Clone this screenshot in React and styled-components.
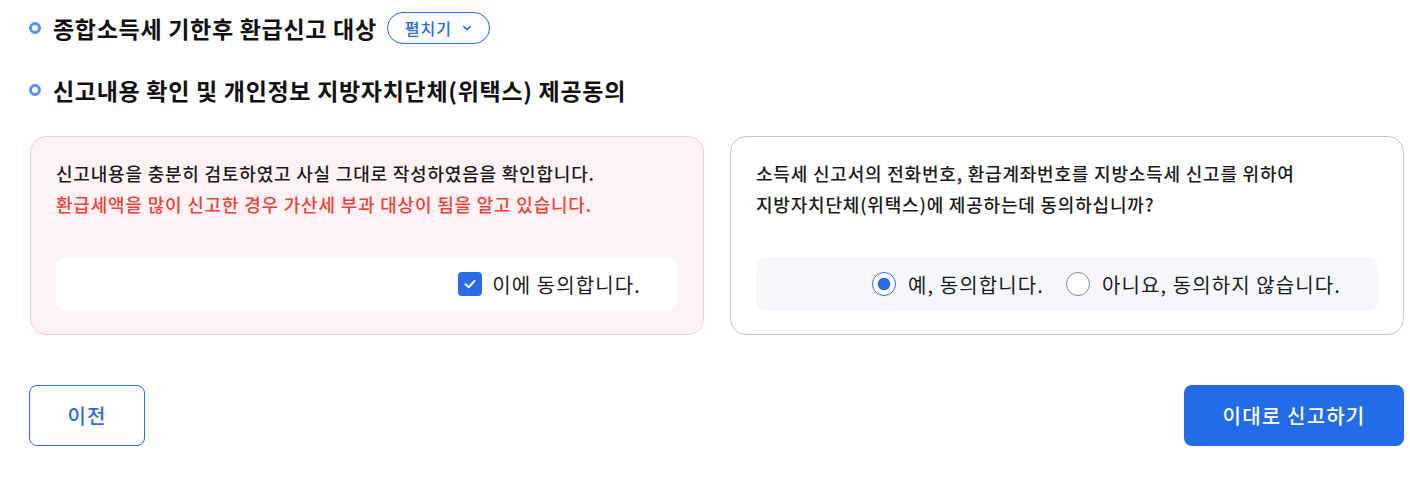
import React, { useState } from 'react';
import styled, { createGlobalStyle } from 'styled-components';

const GlobalStyle = createGlobalStyle`
	* {
		box-sizing: border-box;
	}
	body {
		margin: 0;
		background: #ffffff;
		font-family: 'Noto Sans CJK KR', 'Noto Sans', sans-serif;
		color: #111111;
	}
`;

function Chevron() {
	return (
		<svg width='10' height='10' viewBox='0 0 10 10' fill='none'>
			<path
				d='M1.8 3.6L5 6.6L8.2 3.6'
				stroke='#2a6be6'
				strokeWidth='1.7'
				strokeLinecap='round'
				strokeLinejoin='round'
			/>
		</svg>
	);
}

function Check() {
	return (
		<svg width='16' height='16' viewBox='0 0 16 16' fill='none'>
			<path
				d='M3.5 8.3L6.6 11.2L12.5 5'
				stroke='#ffffff'
				strokeWidth='2'
				strokeLinecap='round'
				strokeLinejoin='round'
			/>
		</svg>
	);
}

export default function App() {
	const [agree, setAgree] = useState(true);
	const [wetax, setWetax] = useState('yes');

	return (
		<>
			<GlobalStyle />
			<Page>
				<SectionTitle>
					<Bullet />
					<span>종합소득세 기한후 환급신고 대상</span>
					<ToggleButton type='button'>
						펼치기 <Chevron />
					</ToggleButton>
				</SectionTitle>
				<SectionTitle>
					<Bullet />
					<span>신고내용 확인 및 개인정보 지방자치단체(위택스) 제공동의</span>
				</SectionTitle>

				<Cards>
					<Card $tone='warn'>
						<Text>
							신고내용을 충분히 검토하였고 사실 그대로 작성하였음을 확인합니다.
							<br />
							<Warn>환급세액을 많이 신고한 경우 가산세 부과 대상이 됨을 알고 있습니다.</Warn>
						</Text>
						<ChoiceBox $tone='warn'>
							<Choice $gap={10} onClick={() => setAgree(!agree)}>
								<CheckBox $on={agree}>{agree && <Check />}</CheckBox>
								이에 동의합니다.
							</Choice>
						</ChoiceBox>
					</Card>

					<Card>
						<Text>
							소득세 신고서의 전화번호, 환급계좌번호를 지방소득세 신고를 위하여
							<br />
							지방자치단체(위택스)에 제공하는데 동의하십니까?
						</Text>
						<ChoiceBox>
							<Choice $gap={12} onClick={() => setWetax('yes')}>
								<Radio $on={wetax === 'yes'} />
								예, 동의합니다.
							</Choice>
							<Choice $gap={12} onClick={() => setWetax('no')}>
								<Radio $on={wetax === 'no'} />
								아니요, 동의하지 않습니다.
							</Choice>
						</ChoiceBox>
					</Card>
				</Cards>

				<Footer>
					<PrevButton type='button'>이전</PrevButton>
					<SubmitButton type='button'>이대로 신고하기</SubmitButton>
				</Footer>
			</Page>
		</>
	);
}

const Page = styled.div`
	width: 1404px;
	padding: 12px 0 0 29px;
`;

const SectionTitle = styled.h3`
	display: flex;
	align-items: center;
	height: 32px;
	margin: 0 0 30px;
	font-size: 23px;
	font-weight: 700;
	color: #111111;
	letter-spacing: 0.7px;
`;

const Bullet = styled.i`
	width: 12px;
	height: 12px;
	margin-right: 12px;
	border: 3px solid #5b8ff2;
	border-radius: 50%;
`;

const ToggleButton = styled.button`
	display: flex;
	align-items: center;
	gap: 10px;
	height: 32px;
	margin-left: 10px;
	padding: 0 17px;
	border: 1px solid #2a6be6;
	border-radius: 16px;
	background: #ffffff;
	color: #2a6be6;
	font-family: inherit;
	font-size: 16px;
	font-weight: 500;
	letter-spacing: 1px;
`;

const Cards = styled.div`
	display: grid;
	grid-template-columns: 674px 674px;
	gap: 26px;
	padding-left: 1px;
`;

const Card = styled.div`
	display: flex;
	flex-direction: column;
	padding: 21px 25px 23px;
	border: 1px solid ${(p) => (p.$tone === 'warn' ? '#f9cbd7' : '#c6c6c6')};
	border-radius: 16px;
	background: ${(p) => (p.$tone === 'warn' ? '#fff2f5' : '#ffffff')};
`;

const Text = styled.p`
	margin: 0 0 37px;
	font-size: 18px;
	font-weight: 500;
	line-height: 31px;
	letter-spacing: 0.8px;
	color: #1a1a1a;
`;

const Warn = styled.span`
	color: #f2403a;
`;

const ChoiceBox = styled.div`
	display: flex;
	justify-content: flex-end;
	align-items: center;
	gap: 22px;
	height: 54px;
	padding-right: 37px;
	border-radius: 10px;
	background: ${(p) => (p.$tone === 'warn' ? '#ffffff' : '#f5f7fd')};
`;

const Choice = styled.label`
	display: flex;
	align-items: center;
	gap: ${(p) => p.$gap}px;
	font-size: 20px;
	letter-spacing: 1.1px;
	color: #1a1a1a;
	cursor: pointer;
`;

const CheckBox = styled.span`
	display: flex;
	align-items: center;
	justify-content: center;
	width: 24px;
	height: 24px;
	border-radius: 4px;
	background: ${(p) => (p.$on ? '#2a6be6' : '#ffffff')};
	border: ${(p) => (p.$on ? 'none' : '1px solid #999')};
`;

const Radio = styled.span`
	width: 24px;
	height: 24px;
	border-radius: 50%;
	border: 1px solid ${(p) => (p.$on ? '#2a6be6' : '#8a8a8a')};
	background: ${(p) =>
		p.$on ? 'radial-gradient(circle, #2a6be6 0 6px, #ffffff 6.6px)' : '#ffffff'};
`;

const Footer = styled.div`
	display: flex;
	justify-content: space-between;
	margin-top: 50px;
`;

const PrevButton = styled.button`
	width: 116px;
	height: 61px;
	border: 1px solid #2a6be6;
	border-radius: 8px;
	background: #ffffff;
	color: #2a6be6;
	font-family: inherit;
	font-size: 20px;
	font-weight: 500;
	letter-spacing: 1.2px;
`;

const SubmitButton = styled.button`
	width: 220px;
	height: 61px;
	border: none;
	border-radius: 8px;
	background: #236ce8;
	color: #ffffff;
	font-family: inherit;
	font-size: 20px;
	font-weight: 500;
	letter-spacing: 1.2px;
`;
